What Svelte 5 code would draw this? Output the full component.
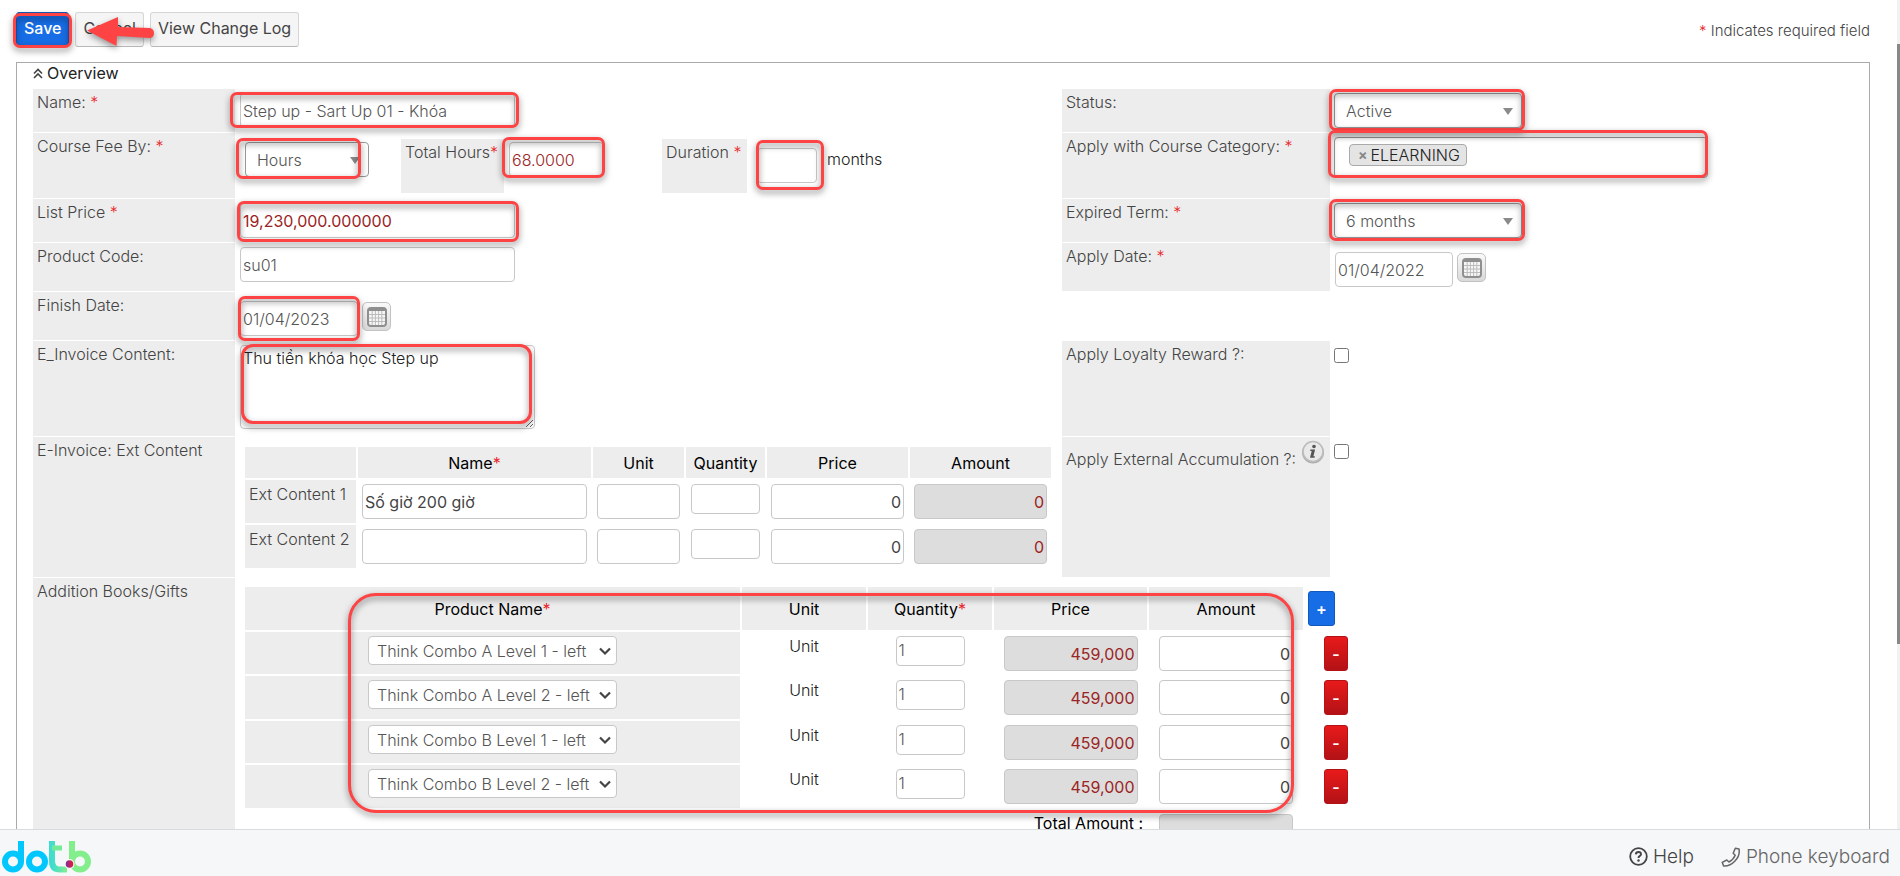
<script>
  let extRows = $state([
    { label: 'Ext Content 1', name: 'Số giờ 200 giờ', unit: '', qty: '', price: '0', amount: '0' },
    { label: 'Ext Content 2', name: '', unit: '', qty: '', price: '0', amount: '0' }
  ]);
  let books = $state([
    { product: 'Think Combo A Level 1 - left', qty: '1', price: '459,000', amount: '0' },
    { product: 'Think Combo A Level 2 - left', qty: '1', price: '459,000', amount: '0' },
    { product: 'Think Combo B Level 1 - left', qty: '1', price: '459,000', amount: '0' },
    { product: 'Think Combo B Level 2 - left', qty: '1', price: '459,000', amount: '0' }
  ]);
  let invoice = $state('Thu tiền khóa học Step up');
  const products = [
    'Think Combo A Level 1 - left',
    'Think Combo A Level 2 - left',
    'Think Combo B Level 1 - left',
    'Think Combo B Level 2 - left'
  ];
</script>

{#snippet req()}<span class="req">*</span>{/snippet}

{#snippet caret()}
  <svg class="caret" width="10" height="7" viewBox="0 0 10 7" aria-hidden="true"><path d="M0 0h10L5 7z" fill="#8a8a8a" /></svg>
{/snippet}

{#snippet calendar(name)}
  <button class="cal" type="button" aria-label={name}>
    <svg width="22" height="20" viewBox="0 0 22 20" aria-hidden="true">
      <rect x="1" y="0" width="20" height="20" rx="4" fill="#8f8f8f" />
      <path d="M3 4h16v12q0 2-2 2H5q-2 0-2-2z" fill="#f6f6f6" />
      <path d="M3 7.500h16M3 11h16M3 14.500h16M6.200 4v14M9.400 4v14M12.600 4v14M15.800 4v14" stroke="#bcbcbc" stroke-width="1" />
    </svg>
  </button>
{/snippet}

<div class="page">
  <main>
    <div class="toolbar">
      <div class="buttons">
        <span class="anchor">
          <button class="btn primary" type="button">Save</button>
          <span class="mark mark-save"></span>
        </span>
        <span class="anchor">
          <button class="btn" type="button">Cancel</button>
          <svg class="arrow" width="74" height="36" viewBox="0 0 74 36" aria-hidden="true">
            <path d="M2 16.500 L33 3 L33 13 L65 14 Q69 15 69 19 Q69 23.500 65 24 L32 22 L31.500 32 Z" fill="#fd4343" />
          </svg>
        </span>
        <button class="btn" type="button">View Change Log</button>
      </div>
      <p class="note">{@render req()} Indicates required field</p>
    </div>

    <section class="panel">
      <h2>
        <svg width="10" height="11" viewBox="0 0 10 11" aria-hidden="true"><path d="M1 5.500 5 1.500 9 5.500M1 10 5 6 9 10" fill="none" stroke="#444" stroke-width="1.600" /></svg>
        Overview
      </h2>

      <div class="form">
        <label class="cell" for="name">Name: {@render req()}</label>
        <div class="value">
          <span class="anchor">
            <input id="name" class="wide" value="Step up - Sart Up 01 - Khóa" />
            <span class="mark mark-name"></span>
          </span>
        </div>
        <label class="cell" for="status">Status:</label>
        <div class="value">
          <span class="anchor">
            <select id="status" class="pick medium"><option>Active</option><option>Inactive</option></select>
            {@render caret()}
            <span class="mark mark-pick"></span>
          </span>
        </div>

        <label class="cell" for="fee">Course Fee By: {@render req()}</label>
        <div class="value fee">
          <span class="anchor drop">
            <select id="fee" class="pick small"><option>Hours</option></select>
            {@render caret()}
            <span class="mark mark-hours"></span>
          </span>
          <label class="cell sub total" for="hours">Total Hours{@render req()}</label>
          <span class="anchor drop">
            <input id="hours" class="hours money" value="68.0000" />
            <span class="mark mark-total"></span>
          </span>
          <label class="cell sub duration" for="duration">Duration {@render req()}</label>
          <span class="anchor lower">
            <input id="duration" class="months" />
            <span class="mark mark-duration"></span>
          </span>
          <span class="suffix">months</span>
        </div>
        <label class="cell" for="category">Apply with Course Category: {@render req()}</label>
        <div class="value">
          <div class="anchor tags">
            <span class="tag"><button type="button" aria-label="Remove">×</button>ELEARNING</span>
            <input id="category" />
            <span class="mark mark-tags"></span>
          </div>
        </div>

        <label class="cell" for="price">List Price {@render req()}</label>
        <div class="value">
          <span class="anchor">
            <input id="price" class="wide money strong" value="19,230,000.000000" />
            <span class="mark mark-price"></span>
          </span>
        </div>
        <label class="cell" for="term">Expired Term: {@render req()}</label>
        <div class="value">
          <span class="anchor">
            <select id="term" class="pick medium"><option>6 months</option></select>
            {@render caret()}
            <span class="mark mark-pick"></span>
          </span>
        </div>

        <label class="cell" for="code">Product Code:</label>
        <div class="value"><input id="code" class="wide" value="su01" /></div>
        <label class="cell" for="apply">Apply Date: {@render req()}</label>
        <div class="value date">
          <input id="apply" class="day" value="01/04/2022" />
          {@render calendar('Choose apply date')}
        </div>

        <label class="cell" for="finish">Finish Date:</label>
        <div class="value date">
          <span class="anchor">
            <input id="finish" class="day" value="01/04/2023" />
            <span class="mark mark-date"></span>
          </span>
          {@render calendar('Choose finish date')}
        </div>
        <div></div>
        <div></div>

        <label class="cell" for="invoice">E_Invoice Content:</label>
        <div class="value area">
          <span class="anchor">
            <textarea id="invoice" bind:value={invoice}></textarea>
            <span class="mark mark-area"></span>
          </span>
        </div>
        <label class="cell" for="loyalty">Apply Loyalty Reward ?:</label>
        <div class="value check"><input id="loyalty" type="checkbox" /></div>

        <div class="cell">E-Invoice: Ext Content</div>
        <div class="value grid-value">
          <table class="ext">
            <colgroup><col class="w111" /><col class="w233" /><col class="w91" /><col class="w79" /><col class="w141" /><col class="w141" /></colgroup>
            <thead>
              <tr><th></th><th>Name{@render req()}</th><th>Unit</th><th>Quantity</th><th>Price</th><th>Amount</th></tr>
            </thead>
            <tbody>
              {#each extRows as row}
                <tr>
                  <td class="shade">{row.label}</td>
                  <td><input aria-label="Name" class="dark" bind:value={row.name} /></td>
                  <td><input aria-label="Unit" class="dark" bind:value={row.unit} /></td>
                  <td><input aria-label="Quantity" class="qty" bind:value={row.qty} /></td>
                  <td><input aria-label="Price" class="dark right" bind:value={row.price} /></td>
                  <td><input aria-label="Amount" class="right locked" readonly value={row.amount} /></td>
                </tr>
              {/each}
            </tbody>
          </table>
        </div>
        <div class="cell external">
          <label for="external">Apply External Accumulation ?:</label>
          <svg width="24" height="24" viewBox="0 0 24 24" aria-hidden="true">
            <circle cx="12" cy="12.500" r="11" fill="#b0b0b0" />
            <circle cx="12" cy="11.500" r="10" fill="#e9e9e9" stroke="#bcbcbc" stroke-width="1.500" />
            <circle cx="13" cy="6.500" r="1.800" fill="#555" />
            <path d="M9.500 9.500h4.600l-1.700 6.700h1.500l-.4 1.500H9l1.700-6.600H9.100z" fill="#555" />
          </svg>
        </div>
        <div class="value check"><input id="external" type="checkbox" /></div>

        <div class="cell">Addition Books/Gifts</div>
        <div class="value span-rest">
          <div class="anchor">
            <table class="books">
              <colgroup><col class="w495" /><col class="w124" /><col class="w124" /><col class="w153" /><col class="w154" /><col class="w48" /></colgroup>
              <thead>
                <tr>
                  <th>Product Name{@render req()}</th><th>Unit</th><th>Quantity{@render req()}</th><th>Price</th><th>Amount</th>
                  <td class="plus"><button class="add" type="button" aria-label="Add row">+</button></td>
                </tr>
              </thead>
              <tbody>
                {#each books as row}
                  <tr>
                    <td class="shade">
                      <span class="anchor product">
                        <select aria-label="Product" bind:value={row.product}>
                          {#each products as p}<option>{p}</option>{/each}
                        </select>
                        <svg class="chevron" width="12" height="9" viewBox="0 0 12 9" aria-hidden="true"><path d="M1 1.500 6 6.500 11 1.500" fill="none" stroke="#444" stroke-width="2.200" /></svg>
                      </span>
                    </td>
                    <td class="unit">Unit</td>
                    <td><input aria-label="Quantity" class="qty" bind:value={row.qty} /></td>
                    <td><input aria-label="Price" class="num right locked" readonly value={row.price} /></td>
                    <td><input aria-label="Amount" class="num right dark" bind:value={row.amount} /></td>
                    <td class="minus"><button class="del" type="button" aria-label="Remove row">-</button></td>
                  </tr>
                {/each}
                <tr class="sum">
                  <td colspan="4"><label for="total">Total Amount :</label></td>
                  <td><input id="total" class="num right locked" readonly /></td>
                </tr>
              </tbody>
            </table>
            <span class="mark mark-books"></span>
          </div>
        </div>
      </div>
    </section>
    <div class="track"><div class="thumb"></div></div>
  </main>

  <footer>
    <svg class="logo" width="90" height="32" viewBox="0 0 90 32" role="img" aria-label="dotb">
      <defs>
        <linearGradient id="tg" x1="0" x2="1"><stop offset="0" stop-color="#3fdcd0" /><stop offset="1" stop-color="#83ee8c" /></linearGradient>
        <linearGradient id="dg" x1="0" x2="1"><stop offset="0" stop-color="#7b2fa0" /><stop offset="1" stop-color="#ee1c2e" /></linearGradient>
      </defs>
      <g fill="none" stroke-width="6">
        <circle cx="11" cy="20.500" r="8" stroke="#00c8ff" />
        <path d="M19 0v21" stroke="#00c8ff" />
        <circle cx="35" cy="20.500" r="8" stroke="#00c8ff" />
        <path d="M50 0V20Q50 28.500 58 28.500H65" stroke="url(#tg)" />
        <path d="M50 7h10" stroke="#72eb98" stroke-width="5" />
        <circle cx="78" cy="20.500" r="8" stroke="#83ee8c" />
        <path d="M70 0v21" stroke="#83ee8c" />
      </g>
      <circle cx="67.500" cy="23" r="5" fill="#f6f7f9" />
      <circle cx="67.500" cy="23" r="3.800" fill="url(#dg)" />
    </svg>
    <nav>
      <a class="help" href="#help">
        <svg width="19" height="19" viewBox="0 0 19 19" aria-hidden="true">
          <circle cx="9.500" cy="9.500" r="8.300" fill="none" stroke="#444" stroke-width="1.800" />
          <path d="M6.800 7.400Q7 5 9.500 5T12 7.300Q12 8.500 10.600 9.200 9.500 9.800 9.500 11" fill="none" stroke="#444" stroke-width="1.900" />
          <circle cx="9.500" cy="13.500" r="1.200" fill="#444" />
        </svg>
        Help
      </a>
      <a href="#phone">
        <svg width="20" height="20" viewBox="0 0 20 20" aria-hidden="true">
          <path d="M14.300 1.200 18 2Q19.300 8.500 14 14T2.600 19L1.200 15.300 5.800 13 8 15Q12.500 12.500 14.200 8.300L12.200 6.300z" fill="none" stroke="#666" stroke-width="1.500" stroke-linejoin="round" />
        </svg>
        Phone keyboard
      </a>
    </nav>
  </footer>
</div>

<style>
  :global(body) { margin: 0; background: #fff; }
  .page {
    height: 100vh;
    display: flex;
    flex-direction: column;
    overflow: hidden;
    font: 300 16px/20px Inter, sans-serif;
    color: #444;
  }
  .page :is(input, select, textarea, button) {
    font: inherit;
    box-sizing: border-box;
    margin: 0;
  }
  main { position: relative; flex: 1; min-height: 0; overflow: hidden; padding: 12px 30px 0 16px; }
  .toolbar { display: flex; justify-content: space-between; align-items: flex-start; height: 50px; }
  .buttons { display: flex; gap: 6px; }
  .page .btn {
    display: block;
    height: 35px;
    padding: 0 7px 4px;
    border: 1px solid #d6d6d6;
    border-bottom-color: #b8b8b8;
    border-radius: 3px;
    background: #f5f5f5;
    color: #444;
    font-weight: 400;
  }
  .page .btn.primary { background: #176de5; border-color: #1259bd; color: #fff; font-weight: 500; }
  .note { margin: 9px 0 0; font-size: 15px; }
  .req { color: #e8262a; }
  .anchor { position: relative; display: block; width: max-content; }
  .arrow { position: absolute; left: 10px; top: 2px; filter: drop-shadow(0 3px 3px rgba(0, 0, 0, 0.4)); z-index: 2; }

  .panel { border: 1px solid #aaa; border-bottom: 0; padding: 0 0 60px 16px; }
  h2 { display: flex; align-items: center; gap: 4px; margin: 0; height: 20px; padding-bottom: 6px; font-size: 16px; font-weight: 400; color: #222; }

  .form { display: grid; grid-template-columns: 202px minmax(0, 827fr) 268px minmax(0, 539fr); row-gap: 1px; }
  .cell { background: #ededed; padding: 3px 4px; box-sizing: border-box; }
  .value { padding: 4px 0 4px 5px; box-sizing: border-box; min-width: 0; }

  input:not([type='checkbox']), select, textarea {
    height: 35px;
    border: 1px solid #c8c8c8;
    border-radius: 4px;
    background: #fff;
    color: #555;
    padding: 0 2px;
    display: block;
  }
  .page textarea { width: 295px; height: 84px; color: #222; resize: both; padding: 2px; }
  .value.area { padding-bottom: 7px; }
  .page .value .wide { width: 275px; }
  .page .day { width: 118px; }
  .page .money { color: #9b2424; }
  .page .strong { font-weight: 400; }
  .page .pick { appearance: none; border-color: #999; padding: 0 11px; }
  .page .medium { width: 188px; margin-left: -1px; }
  .small { width: 124px; }
  .caret { position: absolute; right: 9px; top: 15px; }

  .fee { display: flex; align-items: flex-start; padding: 6px 0 5px 10px; }
  .drop { margin-top: 3px; }
  .lower { margin: 9px 0 0 10px; }
  .sub { height: 54px; }
  .total { width: 103px; margin-left: 32px; white-space: nowrap; }
  .duration { width: 85px; margin-left: 58px; }
  .page .hours { width: 95px; margin-left: 5px; }
  .page .months { width: 60px; }
  .suffix { margin: 10px 0 0 10px; color: #222; }

  .tags { display: flex; width: 374px; height: 41px; box-sizing: border-box; border: 1px solid #999; border-radius: 4px; padding: 6px 14px; gap: 6px; margin-left: -1px; }
  .tag { display: flex; align-items: center; gap: 3px; height: 22px; box-sizing: border-box; border: 1px solid #aaa; border-radius: 4px; background: #e4e4e4; padding: 0 6px 0 8px; color: #222; }
  .page .tag button { border: 0; background: none; padding: 0; color: #888; font-size: 14px; font-weight: 700; }
  .page .tags input { border: 0; flex: 1; min-width: 0; height: 22px; background: none; }

  .date { display: flex; gap: 4px; padding-top: 9px; }
  .page .cal { width: 29px; height: 29px; margin-top: 1px; border: 1px solid #c2c2c2; border-radius: 5px; background: linear-gradient(#fafafa, #d9d9d9); padding: 0; display: grid; place-items: center; }

  .check { padding: 7px 0 0 4px; }
  .check input { display: block; width: 15px; height: 15px; }
  .external { display: flex; align-items: flex-start; gap: 5px; }
  .external label { margin-top: 9px; white-space: nowrap; }

  table { table-layout: fixed; border-collapse: separate; border-spacing: 2px; }
  th { background: #ededed; font-weight: 400; color: #000; padding: 0; height: 31px; }
  td { padding: 4px; vertical-align: top; }
  td input { width: 100%; }
  .shade { background: #ededed; white-space: nowrap; }
  .page td .qty { width: 69px; height: 30px; margin: 0 auto; padding-bottom: 2px; }
  .right { text-align: right; }
  .page .dark { color: #444; font-weight: 400; }
  .page td .locked { background: #ddd; color: #9b2424; font-weight: 400; }
  .grid-value { padding: 8px 0 7px 8px; }
  .ext { width: 810px; }
  .w111 { width: 111px; } .w233 { width: 233px; } .w91 { width: 91px; } .w79 { width: 79px; } .w141 { width: 141px; }
  .w495 { width: 495px; } .w124 { width: 124px; } .w153 { width: 153px; } .w154 { width: 154px; } .w48 { width: 48px; }

  .span-rest { grid-column: 2 / -1; padding: 7px 0 0 8px; }
  .books { width: 1112px; }
  .books th { height: 43px; }
  .books tbody td { padding-bottom: 3px; }
  .books tbody tr:nth-child(even) td { padding-bottom: 4px; }
  .page .product select { appearance: none; width: 249px; height: 29px; padding: 0 8px; }
  .product { margin-left: 119px; }
  .chevron { position: absolute; right: 6px; top: 11px; }
  .books .unit { text-align: center; color: #222; }
  .page .books .num { width: 134px; margin: 0 auto; }
  .books .plus { padding: 4px 3px; }
  .books .minus { padding-left: 19px; }
  .page .add, .page .del { display: block; height: 35px; border-radius: 3px; color: #fff; font-weight: 600; padding: 0; }
  .page .add { width: 27px; background: #176de5; border: 1px solid #1259bd; }
  .page .del { width: 24px; background: linear-gradient(#e81a1a, #b31217); border: 1px solid #b31217; }
  .sum label { display: block; text-align: right; color: #000; font-weight: 400; line-height: 18px; }

  .mark { position: absolute; border: 3px solid #fd4343; border-radius: 7px; pointer-events: none; filter: drop-shadow(0 3px 3px rgba(0, 0, 0, 0.5)); z-index: 1; }
  .mark-save { inset: 1px -3px -1px -3px; }
  .mark-name { inset: -1px -4px 0 -10px; }
  .mark-pick { inset: -4px -3px -3px -6px; }
  .mark-hours { inset: -4px 8px -2px -9px; }
  .mark-total { inset: -5px -1px -1px -2px; }
  .mark-duration { inset: -8px -7px -7px -1px; }
  .mark-tags { inset: -8px -1px -1px -7px; }
  .mark-price { inset: -2px -4px -4px -3px; }
  .mark-date { inset: -5px -2px -5px -2px; }
  .mark-area { inset: -1px 3px 5px 1px; border-radius: 12px; }
  .mark-books { left: 105px; width: 940px; top: 8px; height: 214px; border-radius: 28px; }

  .track { position: absolute; right: 0; top: 0; bottom: 0; width: 3px; background: #f1f1f1; padding-top: 44px; box-sizing: border-box; }
  .thumb { height: 600px; background: #888; }

  footer { display: flex; justify-content: space-between; align-items: center; height: 46px; border-top: 1px solid #d9dbdd; background: #f6f7f9; padding: 0 10px 0 2px; }
  .logo { margin-top: 8px; }
  nav { display: flex; gap: 27px; margin-top: 7px; }
  nav a { display: flex; align-items: center; gap: 5px; color: #666; text-decoration: none; font-size: 19px; }
  nav .help { color: #444; }
</style>
